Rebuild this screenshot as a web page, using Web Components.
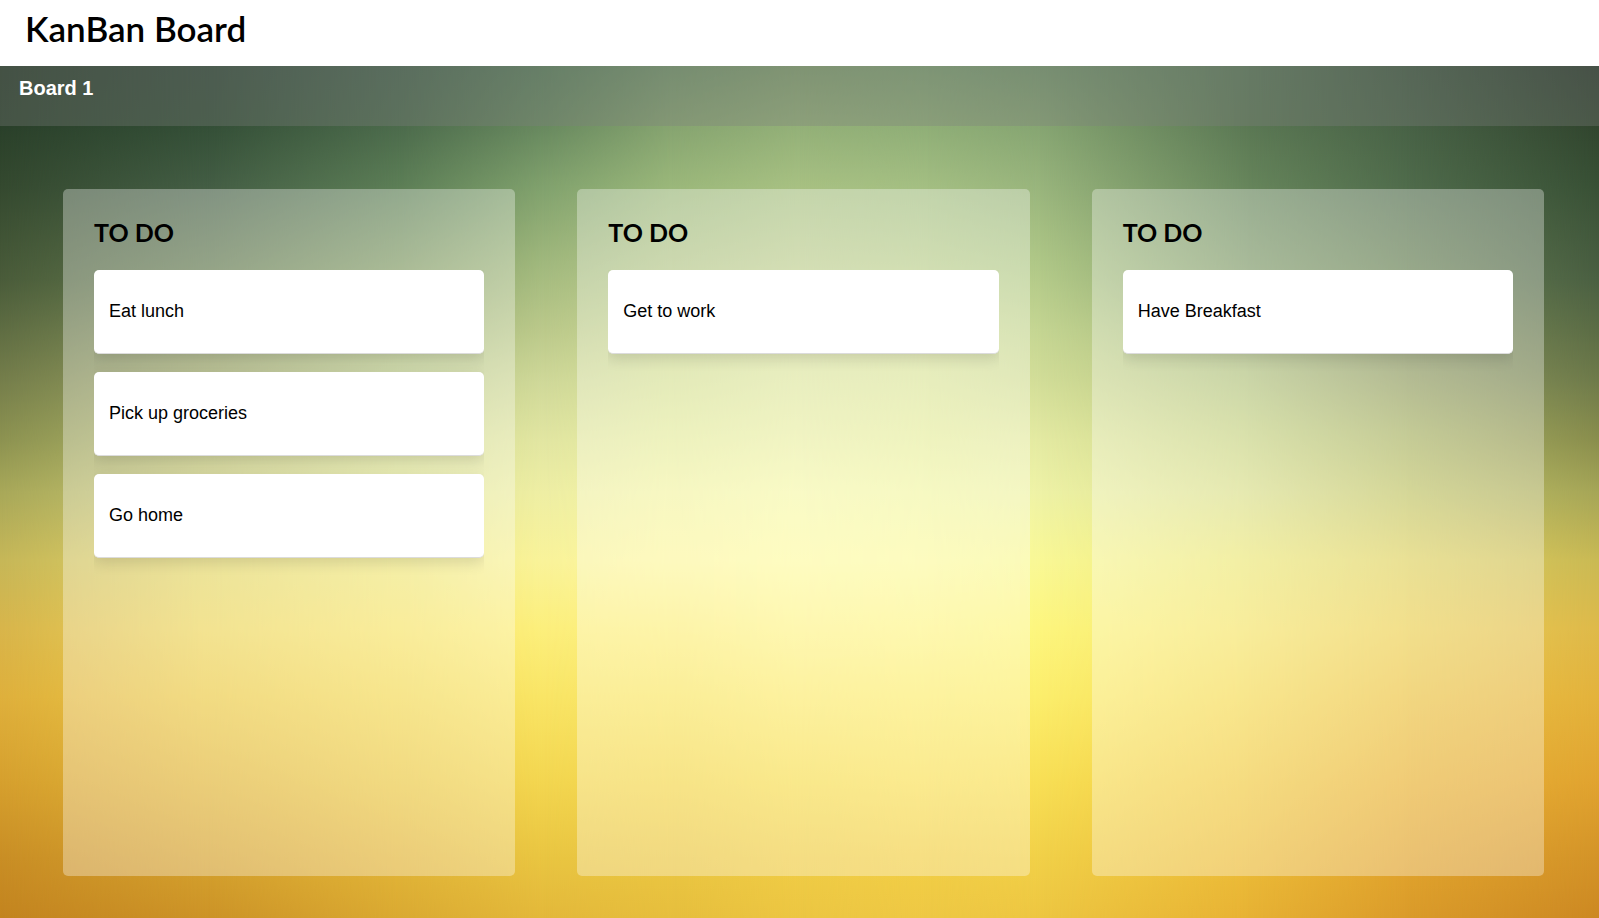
<!DOCTYPE html>
<html lang="en">
<head>
<meta charset="utf-8">
<meta name="viewport" content="width=device-width, initial-scale=1">
<title>KanBan Board</title>
<style>
  html, body { margin: 0; min-height: 100%; }
  body { font-family: "Liberation Sans", Arial, sans-serif; color: #000; background: #fff; }
</style>
</head>
<body>
<kanban-app>
  <kanban-board name="Board 1">
    <kanban-column heading="TO DO">
      <kanban-card>Eat lunch</kanban-card>
      <kanban-card>Pick up groceries</kanban-card>
      <kanban-card>Go home</kanban-card>
    </kanban-column>
    <kanban-column heading="TO DO">
      <kanban-card>Get to work</kanban-card>
    </kanban-column>
    <kanban-column heading="TO DO">
      <kanban-card>Have Breakfast</kanban-card>
    </kanban-column>
  </kanban-board>
</kanban-app>

<script>
  class BaseElement extends HTMLElement {
    constructor() {
      super();
      this.attachShadow({ mode: 'open' }).innerHTML = this.constructor.markup;
    }
  }

  customElements.define('kanban-app', class extends BaseElement {
    static markup = `
      <style>
        :host { display: flex; flex-direction: column; min-height: 100vh; }
        header { flex: none; box-sizing: border-box; height: 66px; padding: 7px 25px; background: #fff; }
        h1 { margin: 0; font: 600 35px/42px Lato, sans-serif; }
        main { flex: 1; display: grid; }
      </style>
      <header><h1>KanBan Board</h1></header>
      <main><slot></slot></main>`;
  });

  // Soft two-dimensional colour field: vertical gradients placed across the
  // width, each one fading in over the one before it.
  customElements.define('mesh-backdrop', class extends BaseElement {
    static markup = `
      <style>
        :host { display: grid; }
        div { grid-area: 1 / 1; }
      </style>`;

    static columns = [
      [0, '#283c29 0%, #2a402a 7%, #34492f 14%, #4a5c3a 25%, #5f6d43 31%, #757e4b 37%, #8d9351 44%, #a8a859 50%, #c6b758 58%, #d8b54b 66%, #dfb03c 74%, #d6a02e 84%, #c98e25 93%, #c3841f 100%'],
      [13, '#344b3a 0%, #344f37 7%, #435d44 14%, #647b4e 25%, #919c5e 35%, #b0b769 43%, #c9c974 50%, #e3d76a 58%, #edd65c 66%, #ecca46 74%, #e1b638 84%, #d5a22e 93%, #cc9327 100%'],
      [25, '#48654e 0%, #4c6b4c 7%, #5c7e56 14%, #859d65 25%, #b1c17e 35%, #ced78a 43%, #dfe38e 50%, #efe77d 58%, #f7e46a 66%, #f3d955 74%, #ebc843 84%, #e2b538 93%, #daaa32 100%'],
      [34, '#5b7f5c 0%, #68895f 7%, #80a16d 14%, #a0b87d 23%, #bbc98b 31%, #cfd899 37%, #e2e6a2 44%, #eeeea4 50%, #f9f39a 58%, #fcef7c 66%, #f9e566 74%, #f3d650 84%, #e9c541 93%, #e3b83a 100%'],
      [42, '#73946a 0%, #86a470 7%, #9ab77a 14%, #b3c588 23%, #d3de95 35%, #e4eb9e 43%, #f3f4a4 50%, #fdf79f 58%, #fdef7f 66%, #f9e665 74%, #f4d74d 84%, #ebc742 93%, #e6be3d 100%'],
      [50, '#809e6e 0%, #93b078 7%, #a7c082 14%, #bdcd8f 23%, #dbe49f 35%, #e9eea5 43%, #f6f8aa 50%, #fefba3 58%, #fef48a 66%, #fceb70 74%, #f7de53 84%, #f0cd46 93%, #ecc642 100%'],
      [58, '#7d9f71 0%, #8fae77 7%, #a3be82 14%, #b9cd8c 23%, #d9e39b 35%, #e6ed9f 43%, #f2f6a5 50%, #fcfaa0 58%, #fef588 66%, #fced70 74%, #f9e058 84%, #f2cf46 93%, #eec844 100%'],
      [65, '#75966c 0%, #86a572 7%, #98b47c 14%, #afc787 23%, #c4d592 31%, #d2dd98 37%, #e4eaa2 44%, #eef2a6 50%, #f9f896 58%, #fdf67e 66%, #fcee6c 74%, #f8df55 84%, #f1d048 93%, #edc641 100%'],
      [78, '#5a7858 0%, #5b7854 7%, #66855b 14%, #829c6a 25%, #acbd7b 35%, #c5d182 43%, #d9de8a 50%, #ece778 58%, #f5e46a 66%, #f5da55 74%, #f1ca42 84%, #ecbc38 93%, #e7b234 100%'],
      [88, '#435c44 0%, #486246 7%, #4f6b4b 14%, #688152 25%, #89955d 35%, #a7b163 43%, #c0c366 50%, #dfd262 58%, #ecd054 66%, #ecc343 74%, #e9b334 84%, #e1a42d 93%, #da9b2a 100%'],
      [100, '#2b3b2c 0%, #31452e 7%, #385035 14%, #4a5f42 25%, #5b6c45 31%, #6e7a4a 37%, #8a8e4d 44%, #a5a557 50%, #c9b954 58%, #deb94a 66%, #e3b23c 74%, #e0a330 84%, #d39328 93%, #cc8822 100%']
    ];

    connectedCallback() {
      if (this.shadowRoot.querySelector('div')) return;
      let previous = 0;
      for (const [x, stops] of this.constructor.columns) {
        const layer = document.createElement('div');
        layer.style.background = `linear-gradient(${stops})`;
        if (x > 0) {
          layer.style.maskImage = `linear-gradient(to right, transparent ${previous}%, #000 ${x}%)`;
        }
        this.shadowRoot.append(layer);
        previous = x;
      }
    }
  });

  customElements.define('kanban-board', class extends BaseElement {
    static markup = `
      <style>
        :host { display: grid; grid-template: auto 1fr / 1fr; }
        mesh-backdrop { grid-area: 1 / 1 / 3 / 2; }
        .bar {
          grid-area: 1 / 1; z-index: 1; box-sizing: border-box; height: 60px;
          padding: 10px 19px; background: rgba(128, 128, 128, .33);
        }
        h2 { margin: 0; font-size: 20px; line-height: 24px; font-weight: 700; color: #fff; }
        .columns {
          grid-area: 2 / 1; z-index: 1; display: grid; gap: 62px;
          grid-template-columns: repeat(3, 1fr); padding: 63px 55px 42px 63px;
        }
      </style>
      <mesh-backdrop aria-hidden="true"></mesh-backdrop>
      <div class="bar"><h2></h2></div>
      <div class="columns"><slot></slot></div>`;

    connectedCallback() {
      this.shadowRoot.querySelector('h2').textContent = this.getAttribute('name');
    }
  });

  customElements.define('kanban-column', class extends BaseElement {
    static markup = `
      <style>
        :host {
          display: block; box-sizing: border-box; padding: 27px 31px;
          border-radius: 5px; background: rgba(255, 255, 255, .33);
        }
        h3 { margin: 0 0 22px; font: 700 25px/32px Lato, sans-serif; }
        .cards { display: grid; gap: 18px; padding-bottom: 24px; overflow: hidden; }
      </style>
      <h3></h3>
      <div class="cards" role="list"><slot></slot></div>`;

    connectedCallback() {
      this.shadowRoot.querySelector('h3').textContent = this.getAttribute('heading');
    }
  });

  customElements.define('kanban-card', class extends BaseElement {
    static markup = `
      <style>
        :host {
          display: flex; align-items: center; box-sizing: border-box; min-height: 84px;
          padding: 14px 15px 16px; border-radius: 5px; border-bottom: 1px solid #dcdcdc; background: #fff;
          font-size: 18px; line-height: 24px;
          box-shadow: 0 5px 14px rgba(0, 0, 0, .12);
        }
      </style>
      <slot></slot>`;

    connectedCallback() {
      this.setAttribute('role', 'listitem');
    }
  });
</script>
</body>
</html>
